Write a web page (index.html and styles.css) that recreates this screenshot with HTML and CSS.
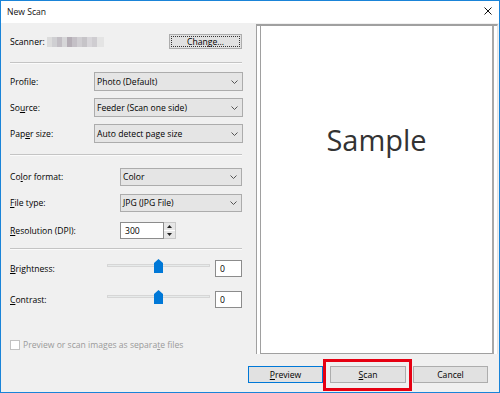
FILE: index.html
```html
<!DOCTYPE html>
<html>
<head>
<meta charset="utf-8">
<title>New Scan</title>
<link rel="stylesheet" href="styles.css">
</head>
<body>
<div class="window">
  <div class="titlebar">
    <span class="title">New Scan</span>
    <svg class="close" width="8" height="8" viewBox="0 0 8 8"><path d="M0.5 0.5 L7.5 7.5 M7.5 0.5 L0.5 7.5" stroke="#111" stroke-width="1" fill="none"/></svg>
  </div>
  <div class="client">
    <div class="main">
      <div class="left">
        <div class="scanner-row">
          <span>Scanner:</span>
          <span class="blur"></span>
          <div class="btn change"><span class="focus">Chan<u>g</u>e...</span></div>
        </div>
        <div class="sep sep1"></div>
        <div class="row first">
          <span class="lbl lbl-a">Prof<u>i</u>le:</span>
          <div class="combo combo-a"><span>Photo (Default)</span><svg class="chev" width="7" height="4" viewBox="0 0 7 4"><path d="M0.5 0.5 L3.5 3.5 L6.5 0.5" stroke="#555" fill="none"/></svg></div>
        </div>
        <div class="row next">
          <span class="lbl lbl-a">So<u>u</u>rce:</span>
          <div class="combo combo-a"><span>Feeder (Scan one side)</span><svg class="chev" width="7" height="4" viewBox="0 0 7 4"><path d="M0.5 0.5 L3.5 3.5 L6.5 0.5" stroke="#555" fill="none"/></svg></div>
        </div>
        <div class="row next">
          <span class="lbl lbl-a">Pap<u>e</u>r size:</span>
          <div class="combo combo-a"><span>Auto detect page size</span><svg class="chev" width="7" height="4" viewBox="0 0 7 4"><path d="M0.5 0.5 L3.5 3.5 L6.5 0.5" stroke="#555" fill="none"/></svg></div>
        </div>
        <div class="sep sep2"></div>
        <div class="row row-b first-b">
          <span class="lbl lbl-b">Co<u>l</u>or format:</span>
          <div class="combo combo-b"><span>Color</span><svg class="chev" width="7" height="4" viewBox="0 0 7 4"><path d="M0.5 0.5 L3.5 3.5 L6.5 0.5" stroke="#555" fill="none"/></svg></div>
        </div>
        <div class="row row-b next-b">
          <span class="lbl lbl-b"><u>F</u>ile type:</span>
          <div class="combo combo-b"><span>JPG (JPG File)</span><svg class="chev" width="7" height="4" viewBox="0 0 7 4"><path d="M0.5 0.5 L3.5 3.5 L6.5 0.5" stroke="#555" fill="none"/></svg></div>
        </div>
        <div class="row row-c">
          <span class="lbl lbl-b"><u>R</u>esolution (DPI):</span>
          <div class="textbox res">300</div>
          <div class="spinner">
            <div class="spin"><svg width="5" height="3" viewBox="0 0 5 3"><path d="M0 3 L2.5 0 L5 3 Z" fill="#222"/></svg></div>
            <div class="spin"><svg width="5" height="3" viewBox="0 0 5 3"><path d="M0 0 L2.5 3 L5 0 Z" fill="#222"/></svg></div>
          </div>
        </div>
        <div class="sep sep3"></div>
        <div class="row row-s first-s">
          <span class="lbl lbl-s"><u>B</u>rightness:</span>
          <div class="slider"><div class="track"></div><svg class="thumb" width="9" height="14" viewBox="0 0 9 14"><path d="M0 4 L4.5 0 L9 4 L9 14 L0 14 Z" fill="#0078d7"/></svg></div>
          <div class="textbox val">0</div>
        </div>
        <div class="row row-s next-s">
          <span class="lbl lbl-s"><u>C</u>ontrast:</span>
          <div class="slider"><div class="track"></div><svg class="thumb" width="9" height="14" viewBox="0 0 9 14"><path d="M0 4 L4.5 0 L9 4 L9 14 L0 14 Z" fill="#0078d7"/></svg></div>
          <div class="textbox val">0</div>
        </div>
        <div class="check-row">
          <span class="checkbox"></span>
          <span class="check-label">Preview or scan images as separa<u>t</u>e files</span>
        </div>
      </div>
      <div class="preview">
        <div class="preview-inner"><span class="sample">Sample</span></div>
      </div>
    </div>
    <div class="buttons">
      <div class="btn dlg default"><span><u>P</u>review</span></div>
      <div class="btn dlg scan"><span><u>S</u>can</span><span class="highlight"></span></div>
      <div class="btn dlg"><span>Cancel</span></div>
    </div>
  </div>
</div>
</body>
</html>
```

FILE: styles.css
```css
html, body {
  margin: 0;
  padding: 0;
}
body {
  width: 500px;
  height: 393px;
  overflow: hidden;
  font-family: "Open Sans", "Noto Sans", sans-serif;
  font-size: 8.6px;
  color: #000;
  background: #fff;
}
u {
  text-decoration: underline;
  text-underline-offset: 1px;
}
.window {
  box-sizing: border-box;
  width: 500px;
  height: 393px;
  border: 1px solid #1a84d8;
  display: flex;
  flex-direction: column;
  background: #f0f0f0;
}
.titlebar {
  height: 22px;
  flex: none;
  background: #fff;
  display: flex;
  align-items: center;
  padding: 0 7px 0 6px;
}
.title {
  flex: 1;
  color: #111;
}
.close {
  display: block;
  margin-top: -2px;
}
.client {
  flex: 1;
  display: flex;
  flex-direction: column;
}
.main {
  display: flex;
  flex: none;
}
.left {
  width: 233px;
  margin-left: 9px;
  padding-top: 11px;
  display: flex;
  flex-direction: column;
}
.scanner-row {
  height: 15px;
  display: flex;
  align-items: center;
}
.blur {
  width: 57px;
  height: 10px;
  margin-left: 2px;
  background: linear-gradient(90deg,
    #dcdcdc 0 5px, #cfcfd2 5px 10px, #c2bec4 10px 15px, #d6d6d8 15px 20px,
    #b5aeb6 20px 25px, #c4c0c6 25px 30px, #d0ced2 30px 35px, #c6c4c8 35px 40px,
    #d8d6da 40px 45px, #cfcdd1 45px 50px, #e4e4e4 50px 57px);
}
.btn {
  box-sizing: border-box;
  border: 1px solid #adadad;
  background: #e1e1e1;
  display: flex;
  align-items: center;
  justify-content: center;
}
.change {
  margin-left: auto;
  margin-right: 1px;
  width: 73px;
  height: 15px;
  padding: 1px;
}
.focus {
  flex: 1;
  align-self: stretch;
  display: flex;
  align-items: center;
  justify-content: center;
  border: 1px dotted #333;
}
.sep {
  width: 232px;
  height: 1px;
  background: #c4c4c4;
  border-bottom: 1px solid #fbfbfb;
}
.sep1 { margin-top: 13px; }
.sep2 { margin-top: 11px; }
.sep3 { margin-top: 9px; }
.row {
  display: flex;
  align-items: center;
}
.lbl { flex: none; }
.lbl-a { width: 84px; }
.lbl-b { width: 110px; }
.lbl-s { width: 97px; }
.first { margin-top: 8px; }
.next { margin-top: 7px; }
.combo {
  box-sizing: border-box;
  height: 19px;
  border: 1px solid #acacac;
  background: #e5e5e5;
  display: flex;
  align-items: center;
  padding: 0 4px 0 2px;
}
.combo span { flex: 1; }
.chev { display: block; }
.combo-a { width: 149px; }
.combo-b { width: 122px; height: 18px; }
.first-b { margin-top: 12px; }
.next-b { margin-top: 8px; }
.row-c { margin-top: 10px; }
.textbox {
  box-sizing: border-box;
  height: 17px;
  border: 1px solid #8c8c8c;
  background: #fff;
  display: flex;
  align-items: center;
  padding-left: 4px;
}
.res { width: 44px; }
.spinner {
  width: 12px;
  height: 17px;
  display: flex;
  flex-direction: column;
  gap: 1px;
  box-sizing: border-box;
  border: 1px solid #c8c8c8;
  border-left: none;
  background: #fff;
}
.spin {
  flex: 1;
  background: #e6e6e6;
  display: flex;
  align-items: center;
  justify-content: center;
}
.spin svg { display: block; }
.first-s { margin-top: 10px; }
.next-s { margin-top: 14px; }
.row-s { align-items: center; }
.slider {
  position: relative;
  width: 103px;
  height: 14px;
  align-self: flex-start;
  margin-top: -1px;
  margin-right: 5px;
}
.track {
  position: absolute;
  left: 0;
  right: 0;
  top: 5px;
  height: 3px;
  box-sizing: border-box;
  background: #e7eaea;
  border: 1px solid #d6d6d6;
}
.thumb {
  position: absolute;
  left: 47px;
  top: 0;
  display: block;
}
.val { width: 27px; }
.check-row {
  margin-top: 32px;
  display: flex;
  align-items: center;
  height: 10px;
}
.checkbox {
  box-sizing: border-box;
  width: 10px;
  height: 10px;
  border: 1px solid #c2c2c2;
  background: #fff;
}
.check-label {
  margin-left: 3px;
  color: #9a9a9a;
}
.preview {
  box-sizing: border-box;
  width: 242px;
  height: 330px;
  margin: 1px 1px 0 13px;
  background: #fff;
  border-top: 2px solid #a0a0a0;
  border-left: 1px solid #a0a0a0;
  border-right: 1px solid #e3e3e3;
  padding: 0 3px 0 3px;
  display: flex;
}
.preview-inner {
  flex: 1;
  border-left: 1px solid #a0a0a0;
  border-right: 2px solid #a8a8a8;
  border-bottom: 1px solid #a0a0a0;
  display: flex;
  justify-content: center;
  align-items: flex-start;
  padding-top: 94px;
}
.sample {
  font-size: 29px;
  color: #333;
}
.buttons {
  display: flex;
  gap: 7px;
  margin-top: 12px;
  padding-left: 247px;
}
.dlg {
  width: 75px;
  height: 17px;
}
.default { border-color: #0078d7; }
.scan {
  width: 76px;
  position: relative;
}
.highlight {
  position: absolute;
  left: -8px;
  right: -7px;
  top: -8px;
  bottom: -9px;
  border: 3px solid #e60012;
}
```
